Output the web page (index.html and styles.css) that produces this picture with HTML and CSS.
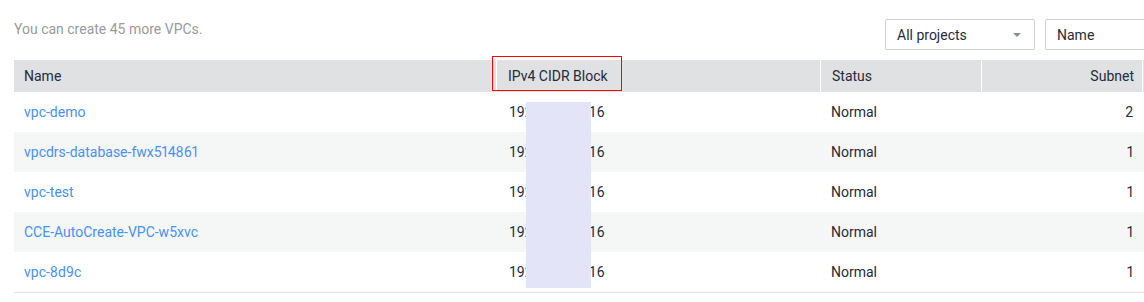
FILE: index.html
```html
<!DOCTYPE html>
<html lang="en">
<head>
<meta charset="utf-8">
<title>VPCs</title>
<link rel="stylesheet" href="styles.css">
</head>
<body>
<div class="page">
  <div class="toolbar">
    <div class="quota">You can create 45 more VPCs.</div>
    <div class="select select-project">
      <span>All projects</span>
      <span class="caret"></span>
    </div>
    <div class="select select-name"><span>Name</span></div>
  </div>
  <div class="table">
    <div class="row head">
      <div class="cell">Name</div>
      <div class="cell sep hl-wrap">IPv4 CIDR Block<span class="highlight"></span></div>
      <div class="cell sep">Status</div>
      <div class="cell sep num">Subnet</div>
      <div class="cell sep"></div>
    </div>
    <div class="body">
      <div class="row">
        <div class="cell"><a class="link">vpc-demo</a></div>
        <div class="cell ip">192.168.0.0/16</div>
        <div class="cell">Normal</div>
        <div class="cell num">2</div>
        <div class="cell"></div>
      </div>
      <div class="row alt">
        <div class="cell"><a class="link">vpcdrs-database-fwx514861</a></div>
        <div class="cell ip">192.168.0.0/16</div>
        <div class="cell">Normal</div>
        <div class="cell num">1</div>
        <div class="cell"></div>
      </div>
      <div class="row">
        <div class="cell"><a class="link">vpc-test</a></div>
        <div class="cell ip">192.168.0.0/16</div>
        <div class="cell">Normal</div>
        <div class="cell num">1</div>
        <div class="cell"></div>
      </div>
      <div class="row alt">
        <div class="cell"><a class="link">CCE-AutoCreate-VPC-w5xvc</a></div>
        <div class="cell ip">192.168.0.0/16</div>
        <div class="cell">Normal</div>
        <div class="cell num">1</div>
        <div class="cell"></div>
      </div>
      <div class="row last">
        <div class="cell"><a class="link">vpc-8d9c</a></div>
        <div class="cell ip">192.168.0.0/16</div>
        <div class="cell">Normal</div>
        <div class="cell num">1</div>
        <div class="cell"></div>
      </div>
      <div class="redact"></div>
    </div>
  </div>
</div>
</body>
</html>
```

FILE: styles.css
```css
html, body {
  margin: 0;
  padding: 0;
  background: #ffffff;
  overflow: hidden;
}

body {
  font-family: Roboto, "Liberation Sans", Arial, sans-serif;
  font-size: 14px;
  color: #252b3a;
  font-variant-numeric: proportional-nums;
}

.page {
  width: 1400px;
  padding-left: 14px;
}

.toolbar {
  display: flex;
  align-items: flex-start;
  padding-top: 19px;
  gap: 10px;
  height: 41px;
  box-sizing: border-box;
}

.quota {
  flex: 0 0 861px;
  color: #9a9a9a;
  line-height: 20px;
}

.select {
  box-sizing: border-box;
  height: 31px;
  border: 1px solid #d0d2d4;
  border-radius: 2px;
  display: flex;
  align-items: center;
  justify-content: space-between;
  padding: 0 13px 0 11px;
  color: #252b3a;
}

.select-project {
  width: 150px;
}

.select-name {
  width: 200px;
}

.caret {
  width: 0;
  height: 0;
  border-left: 4px solid transparent;
  border-right: 4px solid transparent;
  border-top: 4px solid #8a8e99;
  margin-top: 1px;
}

.table {
  margin-top: 19px;
  width: 1329px;
}

.row {
  display: grid;
  grid-template-columns: 482px 324px 161px 161px 201px;
  height: 40px;
  align-items: stretch;
}

.row.alt {
  background: #f5f7f7;
}

.row.last {
  border-bottom: 1px solid #dfe1e3;
}

.row.head {
  height: 32px;
  background: #dfe1e2;
  color: #252b3a;
}

.cell {
  display: flex;
  align-items: center;
  padding: 0 10px;
  white-space: nowrap;
  min-width: 0;
  box-sizing: border-box;
}

.cell.ip {
  font-variant-numeric: tabular-nums;
}

.head .cell.sep {
  border-left: 1px solid #ffffff;
  padding-left: 11px;
}

.cell.num {
  justify-content: flex-end;
  padding-right: 9px;
}

.head .cell.num {
  padding-right: 8px;
}

.row:not(.head) .cell:nth-child(2) {
  padding-left: 13px;
}

.row:not(.head) .cell:nth-child(3) {
  padding-left: 11px;
}

.link {
  color: #4a8ff2;
  text-decoration: none;
}

.hl-wrap {
  position: relative;
}

.highlight {
  position: absolute;
  left: -5px;
  top: -4px;
  width: 130px;
  height: 35px;
  box-sizing: border-box;
  border: 1px solid #ff0000;
}

.body {
  position: relative;
}

.redact {
  position: absolute;
  left: 512px;
  top: 10px;
  width: 65px;
  height: 186px;
  background: #e4e4f8;
}
```
